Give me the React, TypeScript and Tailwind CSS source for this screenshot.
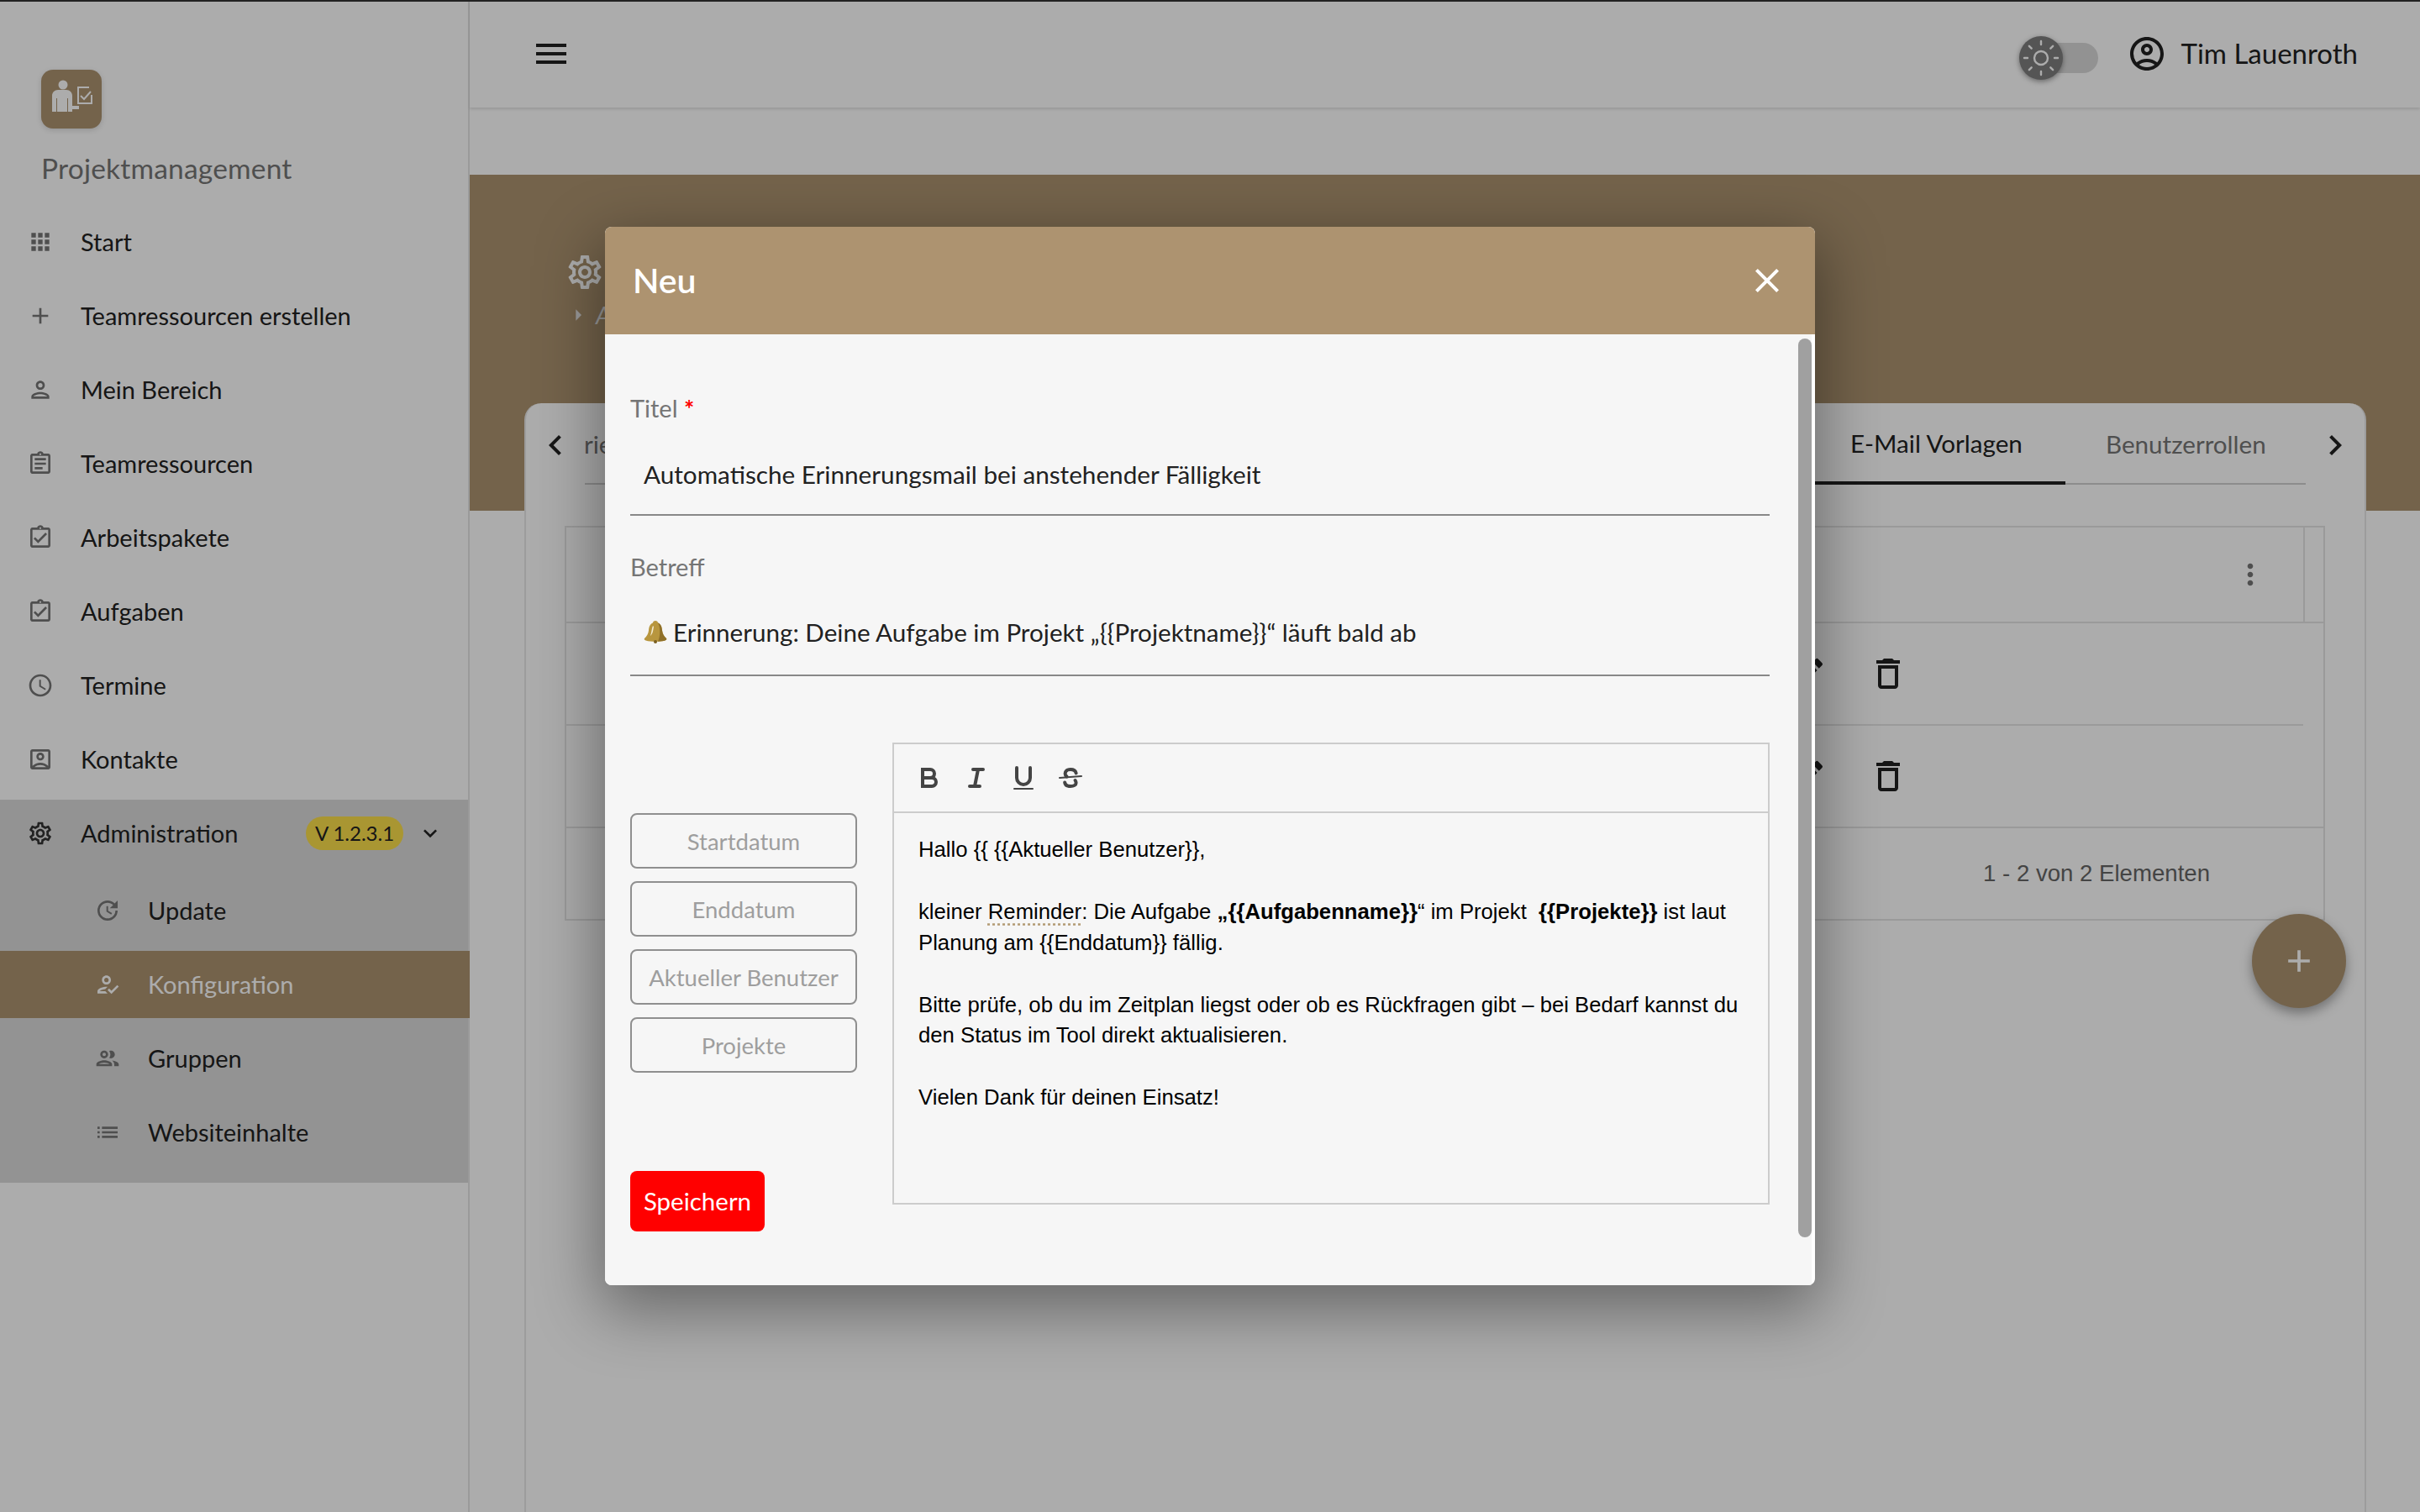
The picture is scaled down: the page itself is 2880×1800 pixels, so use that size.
import React from 'react';
import {
  MdApps,
  MdAdd,
  MdOutlinePerson,
  MdOutlineAssignment,
  MdOutlineAssignmentTurnedIn,
  MdOutlineSchedule,
  MdOutlineAccountBox,
  MdOutlineSettings,
  MdOutlineUpdate,
  MdOutlineHowToReg,
  MdOutlineGroup,
  MdOutlineList,
  MdMenu,
  MdOutlineAccountCircle,
  MdDeleteOutline,
  MdEdit,
  MdMoreVert,
  MdClose,
  MdChevronLeft,
  MdChevronRight,
  MdExpandMore,
  MdArrowRight,
} from 'react-icons/md';
import { Sun } from 'lucide-react';

const navItems = [
  { label: 'Start', icon: MdApps },
  { label: 'Teamressourcen erstellen', icon: MdAdd },
  { label: 'Mein Bereich', icon: MdOutlinePerson },
  { label: 'Teamressourcen', icon: MdOutlineAssignment },
  { label: 'Arbeitspakete', icon: MdOutlineAssignmentTurnedIn },
  { label: 'Aufgaben', icon: MdOutlineAssignmentTurnedIn },
  { label: 'Termine', icon: MdOutlineSchedule },
  { label: 'Kontakte', icon: MdOutlineAccountBox },
];

const subItems = [
  { label: 'Update', icon: MdOutlineUpdate },
  { label: 'Konfiguration', icon: MdOutlineHowToReg, active: true },
  { label: 'Gruppen', icon: MdOutlineGroup },
  { label: 'Websiteinhalte', icon: MdOutlineList },
];

const placeholders = ['Startdatum', 'Enddatum', 'Aktueller Benutzer', 'Projekte'];

const Logo = () => (
  <div className="w-[72px] h-[70px] rounded-[14px] bg-[#ad9370] shadow-[0_2px_6px_rgba(0,0,0,0.15)]">
    <svg width="72" height="70" viewBox="0 0 72 70" fill="none">
      <circle cx="26" cy="18" r="5.500" fill="#fff" />
      <path d="M13 50V31c0-4 3-7 7-7h10c4 0 7 3 7 7v12h8v4H37v3z" fill="#fff" />
      <path d="M18.500 34v16M31.500 34v16" stroke="#ad9370" strokeWidth="1" />
      <path d="M60 30v10H44V21h13" stroke="#fff" strokeWidth="2" />
      <path d="M47 31l4 4 8-9" stroke="#fff" strokeWidth="2" />
    </svg>
  </div>
);

const Sidebar = () => (
  <aside className="w-[559px] shrink-0 bg-white border-r-2 border-[#e4e4e4]">
    <div className="pl-[49px] pt-[83px]">
      <Logo />
      <div className="mt-[27px] h-[40px] leading-[40px] text-[33.500px] text-[#757575] tracking-[0.2px]">Projektmanagement</div>
    </div>
    <nav className="mt-[28px]">
      {navItems.map((item) => (
        <div key={item.label} className="flex items-center h-[80px] mb-[8px] pl-[32px] gap-[32px] text-[#212121]">
          <item.icon size={32} className="text-[#757575]" />
          <span className="text-[29px]">{item.label}</span>
        </div>
      ))}
    </nav>
    <div className="bg-[#dbdbdb] pb-[20px]">
      <div className="flex items-center h-[80px] pl-[32px] gap-[32px] text-[#212121]">
        <MdOutlineSettings size={32} className="text-[#333]" />
        <span className="text-[29px]">Administration</span>
        <div className="ml-auto flex items-center gap-[16px] pr-[29px]">
          <span className="w-[116px] h-[40px] leading-[40px] text-center rounded-full bg-[#fbde4b] text-[24px] text-[#212121]">V 1.2.3.1</span>
          <MdExpandMore size={32} className="text-[#212121]" />
        </div>
      </div>
      <div className="mt-[12px] flex flex-col gap-[8px]">
        {subItems.map((item) => (
          <div
            key={item.label}
            className={`flex items-center h-[80px] pl-[112px] gap-[32px] ${item.active ? 'bg-[#ad9370] text-white -mr-[2px] relative' : 'text-[#212121]'}`}
          >
            <item.icon size={32} className={item.active ? 'text-white' : 'text-[#757575]'} />
            <span className="text-[29px]">{item.label}</span>
          </div>
        ))}
      </div>
    </div>
  </aside>
);

const Header = () => (
  <header className="h-[128px] shrink-0 bg-white flex items-center pl-[73px] pr-[74px] shadow-[0_2px_3px_rgba(0,0,0,0.12)] relative">
    <MdMenu size={48} className="text-[#212121]" />
    <div className="ml-auto relative w-[84px] h-[36px] mt-[9px] rounded-full bg-[#d9d9d9]">
      <div className="absolute -left-[10px] -top-[8px] w-[52px] h-[52px] rounded-full bg-[#7f7f7f] shadow-[0_2px_6px_rgba(0,0,0,0.4)] flex items-center justify-center text-white">
        <Sun size={48} strokeWidth={1.2} />
      </div>
    </div>
    <MdOutlineAccountCircle size={48} className="ml-[34px] text-[#212121]" />
    <span className="ml-[17px] text-[33px] text-[#212121]">Tim Lauenroth</span>
  </header>
);

const TableRow = ({ divider, height }: { divider?: boolean; height: string }) => (
  <div className={`${height} pr-[24px]`}>
    <div className={`h-full flex items-center pl-[1453px] gap-[48px] text-[#212121] ${divider ? 'border-b-2 border-[#e4e4e4]' : ''}`}>
      <MdEdit size={48} />
      <MdDeleteOutline size={48} />
    </div>
  </div>
);

const Content = () => (
  <div className="flex-1 flex flex-col min-w-0">
    <Header />
    <div className="mt-[80px] h-[400px] shrink-0 bg-[#ad9370] pl-[113px] pt-[92px] text-white">
      <MdOutlineSettings size={48} />
      <div className="flex items-center mt-[6px] text-[#e4e4e4]">
        <MdArrowRight size={32} />
        <span className="text-[28px] italic ml-[5px]">A</span>
      </div>
    </div>
    <div className="relative -mt-[128px] ml-[65px] mr-[64px] flex-1 bg-white rounded-t-[20px] border-x-2 border-[#e8e8e8]">
      <div className="flex h-[97px]">
        <div className="w-[70px] flex items-center justify-center pt-[2px] text-[#212121]">
          <MdChevronLeft size={48} />
        </div>
        <div className="flex-1 flex justify-between border-b-2 border-[#d0d0d0] text-[29.600px]">
          <div className="flex items-center pt-[3px] -ml-[1px] text-[#757575]">rie</div>
          <div className="flex">
            <div className="w-[306px] pl-[50px] pt-[3px] flex items-center text-[#212121] border-b-4 border-[#212121] -mb-[2px] relative">E-Mail Vorlagen</div>
            <div className="w-[286px] pl-[48px] pt-[3px] flex items-center text-[#757575]">Benutzerrollen</div>
          </div>
        </div>
        <div className="w-[70px] flex items-center justify-center pt-[2px] text-[#212121]">
          <MdChevronRight size={48} />
        </div>
      </div>
      <div className="mt-[49px] ml-[46px] mr-[47px] border-2 border-[#e4e4e4]">
        <div className="flex h-[114px] border-b-2 border-[#e4e4e4]">
          <div className="flex-1 flex items-center justify-end pr-[43px] text-[#757575]">
            <MdMoreVert size={40} />
          </div>
          <div className="w-[24px] border-l-2 border-[#e4e4e4]" />
        </div>
        <TableRow divider height="h-[122px]" />
        <TableRow height="h-[120px]" />
        <div className="h-[110px] border-t-2 border-[#e4e4e4] flex items-center justify-end pr-[135px] font-['Liberation_Sans',Arial,sans-serif] text-[27.600px] text-[#666]">
          1 - 2 von 2 Elementen
        </div>
      </div>
      <button className="absolute top-[608px] right-[22px] w-[112px] h-[112px] rounded-full bg-[#ad9370] text-white flex items-center justify-center shadow-[0_6px_14px_rgba(0,0,0,0.35)]">
        <MdAdd size={44} />
      </button>
    </div>
  </div>
);

const toolbarIcon = 'w-[56px] h-[36px] flex items-center justify-center';

const EditorToolbar = () => (
  <div className="h-[82px] flex items-center pl-[14px] border-b-2 border-[#ccc]">
    <div className={toolbarIcon}>
      <svg width="36" height="36" viewBox="0 0 18 18" fill="none" stroke="#444" strokeWidth="2">
        <path d="M5,4H9.500A2.500,2.500,0,0,1,12,6.500v0A2.500,2.500,0,0,1,9.500,9H5V4Z" />
        <path d="M5,9h5.500A2.500,2.500,0,0,1,13,11.500v0A2.500,2.500,0,0,1,10.500,14H5V9Z" />
      </svg>
    </div>
    <div className={toolbarIcon}>
      <svg width="36" height="36" viewBox="0 0 18 18" fill="none" stroke="#444" strokeWidth="2" strokeLinecap="round">
        <path d="M7,4H13M5,14H11M8,14L10,4" />
      </svg>
    </div>
    <div className={toolbarIcon}>
      <svg width="36" height="36" viewBox="0 0 18 18" fill="none" stroke="#444" strokeWidth="2" strokeLinecap="round">
        <path d="M5,3V9a4,4,0,0,0,4,4H9a4,4,0,0,0,4-4V3" />
        <rect x="3" y="15" width="12" height="1" rx="0.500" fill="#444" stroke="none" />
      </svg>
    </div>
    <div className={toolbarIcon}>
      <svg width="36" height="36" viewBox="0 0 18 18" fill="none" stroke="#444" strokeLinecap="round">
        <path d="M2.500,9L15.500,8" strokeWidth="1" />
        <path d="M12.300,6.200C12,4.800 10.800,4 9,4 7,4 5.800,5 5.800,6.500 5.800,7.200 6.100,7.700 6.700,8.200M11.800,10.500C12.100,11 12.300,11.500 12.300,12 12.300,13.200 11,14 9,14 7,14 5.800,13.200 5.600,11.800" strokeWidth="2" />
      </svg>
    </div>
  </div>
);

const Editor = () => (
  <div className="w-[1044px] h-[550px] border-2 border-[#ccc] font-['Liberation_Sans',Arial,sans-serif] text-[25.700px] leading-[36.900px] text-black">
    <EditorToolbar />
    <div className="pl-[29px] pr-[25px] pt-[25px]">
      <p>Hallo {'{{'} {'{{'}Aktueller Benutzer{'}}'},</p>
      <p className="mt-[36.900px]">
        kleiner <span className="underline decoration-dotted decoration-[#b39b74] underline-offset-[5px]">Reminder</span>: Die Aufgabe{' '}
        <strong>„{'{{'}Aufgabenname{'}}'}</strong>“ im Projekt&nbsp; <strong>{'{{'}Projekte{'}}'}</strong> ist laut
      </p>
      <p>Planung am {'{{'}Enddatum{'}}'} fällig.</p>
      <p className="mt-[36.900px]">Bitte prüfe, ob du im Zeitplan liegst oder ob es Rückfragen gibt – bei Bedarf kannst du</p>
      <p>den Status im Tool direkt aktualisieren.</p>
      <p className="mt-[36.900px]">Vielen Dank für deinen Einsatz!</p>
    </div>
  </div>
);

const Bell = () => (
  <svg width="28" height="27" viewBox="0 0 28 27" className="shrink-0 mt-[6px]">
    <path d="M14 0c1.800 0 3 1.200 3 2.600 3.500 1.400 4.600 4.600 5 9 .4 4 2.200 6.800 5 9.400 .8 1-.2 2-1.500 2.400-3.500 1-7.500 1.400-11.500 1.400s-8-.4-11.500-1.400C1.200 23 .2 22 1 21c2.800-2.600 4.600-5.400 5-9.400.4-4.400 1.500-7.600 5-9C11 1.200 12.200 0 14 0z" fill="#b8963e" />
    <path d="M17 2.600c3.500 1.400 4.600 4.600 5 9 .4 4 2.200 6.800 5 9.400 .8 1-.2 2-1.500 2.400-2.500.7-5.500 1.100-8.500 1.300C20 18 20 8 17 2.600z" fill="#8f7029" />
    <path d="M11 6c-1.500 3-1.500 8-3 12 3-2 3.500-8 4-11z" fill="#f3ead0" />
    <circle cx="14" cy="25" r="2" fill="#7a5f22" />
  </svg>
);

const NewDialog = () => (
  <div className="relative w-[1440px] h-[1260px] rounded-[8px] overflow-hidden bg-white shadow-[0_24px_76px_6px_rgba(0,0,0,0.4)] flex flex-col">
    <div className="h-[128px] shrink-0 bg-[#ad9370] flex items-center justify-between pl-[33px] pr-[33px] text-white">
      <span className="text-[41px] font-semibold">Neu</span>
      <MdClose size={48} />
    </div>
    <div className="relative flex-1 mr-[4px] bg-[#f6f6f6] pl-[30px] pr-[50px] pt-[68px]">
      <label className="block h-[40px] leading-[40px] text-[29px] text-[#757575]">
        Titel <span className="text-[#ff0000] font-bold">*</span>
      </label>
      <div className="h-[108px] pt-[39px] pl-[16px] border-b-2 border-[#888] leading-[40px] text-[29.700px] text-[#212121]">
        Automatische Erinnerungsmail bei anstehender Fälligkeit
      </div>
      <label className="block mt-[41px] h-[40px] leading-[40px] text-[29px] text-[#757575]">Betreff</label>
      <div className="h-[110px] pt-[38px] pl-[16px] border-b-2 border-[#888] leading-[40px] text-[29.600px] text-[#212121] flex items-start gap-[7px]">
        <Bell />
        <span>Erinnerung: Deine Aufgabe im Projekt „{'{{'}Projektname{'}}'}“ läuft bald ab</span>
      </div>
      <div className="mt-[79px] flex gap-[42px] items-start">
        <div className="w-[270px] pt-[84px]">
          <div className="flex flex-col gap-[15px]">
            {placeholders.map((label) => (
              <div key={label} className="h-[66px] pt-[2px] border-2 border-[#8f8f8f] rounded-[8px] flex items-center justify-center text-[27.500px] text-[#9e9e9e]">
                {label}
              </div>
            ))}
          </div>
          <button className="mt-[117px] w-[160px] h-[72px] rounded-[8px] bg-[#ff0000] text-white text-[29.500px]">Speichern</button>
        </div>
        <Editor />
      </div>
      <div className="absolute top-[5px] right-0 w-[16px] h-[1070px] rounded-full bg-[#a0a0a0]" />
    </div>
  </div>
);

export default function App() {
  return (
    <div className="relative w-[2880px] h-[1800px] overflow-hidden bg-white flex font-['Lato',sans-serif]">
      <Sidebar />
      <Content />
      <div className="absolute inset-0 bg-black/[0.325] flex items-center justify-center">
        <NewDialog />
      </div>
      <div className="absolute top-0 inset-x-0 h-[2px] bg-[#222]" />
    </div>
  );
}
